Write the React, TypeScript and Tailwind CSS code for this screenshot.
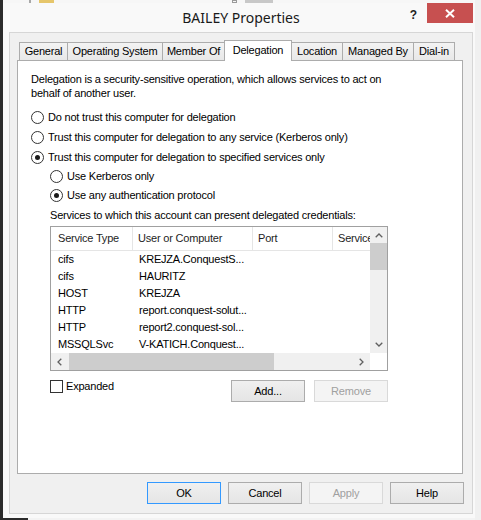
import React from "react";

function Radio({ checked }: { checked?: boolean }) {
  return (
    <span className="w-[13px] h-[13px] rounded-full border border-[#333333] bg-white flex items-center justify-center shrink-0">
      {checked && <span className="w-[5px] h-[5px] rounded-full bg-[#1a1a1a]" />}
    </span>
  );
}

function ChevUp() {
  return (
    <svg width="8" height="5" viewBox="0 0 8 5">
      <path d="M0.7 4.3 L4 1 L7.3 4.3" stroke="#606060" strokeWidth="1.3" fill="none" />
    </svg>
  );
}
function ChevDown() {
  return (
    <svg width="8" height="5" viewBox="0 0 8 5">
      <path d="M0.7 0.7 L4 4 L7.3 0.7" stroke="#606060" strokeWidth="1.3" fill="none" />
    </svg>
  );
}
function ChevLeft() {
  return (
    <svg width="5" height="8" viewBox="0 0 5 8">
      <path d="M4.3 0.7 L1 4 L4.3 7.3" stroke="#606060" strokeWidth="1.3" fill="none" />
    </svg>
  );
}
function ChevRight() {
  return (
    <svg width="5" height="8" viewBox="0 0 5 8">
      <path d="M0.7 0.7 L4 4 L0.7 7.3" stroke="#606060" strokeWidth="1.3" fill="none" />
    </svg>
  );
}

const tabs = [
  { label: "General", cls: "w-[49px]" },
  { label: "Operating System", cls: "w-[96px] -ml-px" },
  { label: "Member Of", cls: "w-[63px] -ml-px" },
  { label: "Delegation", cls: "w-[68px] -ml-px", active: true },
  { label: "Location", cls: "w-[52px] -ml-px" },
  { label: "Managed By", cls: "w-[72px] -ml-px" },
  { label: "Dial-in", cls: "w-[42px] -ml-px" },
];

const rows = [
  ["cifs", "KREJZA.ConquestS..."],
  ["cifs", "HAURITZ"],
  ["HOST", "KREJZA"],
  ["HTTP", "report.conquest-solut..."],
  ["HTTP", "report2.conquest-sol..."],
  ["MSSQLSvc", "V-KATICH.Conquest..."],
];

export default function App() {
  return (
    <div className="w-[481px] h-[520px] flex overflow-hidden bg-[#f0f0f0] font-['Liberation_Sans','Noto_Sans',sans-serif] text-[11px] tracking-[-0.2px] text-black">
      <div className="w-[3px] h-full bg-[#2b2b2b] shrink-0" />
      <div className="w-[472px] shrink-0 flex flex-col">
        {/* strip of the window behind */}
        <div className="h-[3px] flex bg-[#f7f7f7]">
          <div className="w-[26px]" />
          <div className="w-[2px] bg-[#a8a8a8]" />
          <div className="w-[8px]" />
          <div className="w-[15px] bg-[#e6c66b]" />
          <div className="w-[178px]" />
          <div className="w-[5px] border border-[#9a9a9a]" />
          <div className="w-[8px]" />
          <div className="w-[28px] bg-[#c8c8c8]" />
        </div>

        {/* window */}
        <div className="h-[515px] bg-[#f9f9f9] flex flex-col">
          {/* title bar */}
          <div className="h-[29px] grid grid-cols-[1fr_auto_1fr]">
            <div />
            <div className="flex items-center pl-[4px] font-['Noto_Sans',sans-serif] tracking-normal text-[14px] text-[#1a1a1a] whitespace-nowrap">
              BAILEY Properties
            </div>
            <div className="flex justify-end items-start">
              <span className="mt-[4px] mr-[10px] text-[12px] leading-[16px] font-bold text-[#222222]">?</span>
              <div className="w-[46px] h-[20px] mr-[2px] bg-[#c75050] flex items-center justify-center">
                <svg width="10" height="9" viewBox="0 0 10 9">
                  <path d="M1 0.8 L9 8.2 M9 0.8 L1 8.2" stroke="white" strokeWidth="2" />
                </svg>
              </div>
            </div>
          </div>

          {/* inner panel */}
          <div className="ml-[6px] w-[464px] h-[482px] border border-[#d6d6d6] bg-[#f0f0f0] flex flex-col pt-[7px]">
            {/* tabs */}
            <div className="ml-[7px] pl-[2px] flex items-end">
              {tabs.map((t) =>
                t.active ? (
                  <div
                    key={t.label}
                    className={`${t.cls} h-[21px] -mb-px relative z-10 bg-white border border-b-0 border-[#acacac] flex items-center justify-center whitespace-nowrap`}
                  >
                    <span className="-mt-[2px]">{t.label}</span>
                  </div>
                ) : (
                  <div
                    key={t.label}
                    className={`${t.cls} h-[18px] bg-linear-to-b from-[#f3f3f3] to-[#e8e8e8] border border-b-0 border-[#acacac] flex items-center justify-center whitespace-nowrap`}
                  >
                    {t.label}
                  </div>
                )
              )}
            </div>

            {/* tab page */}
            <div className="ml-[7px] w-[446px] h-[414px] border border-[#acacac] bg-white pt-[12px] pl-[13px] flex flex-col">
              <div className="leading-[13.5px] h-[27px]">
                <div>Delegation is a security-sensitive operation, which allows services to act on</div>
                <div>behalf of another user.</div>
              </div>

              <div className="mt-[7px] h-[20px] flex items-center gap-[4px]">
                <Radio />
                <span>Do not trust this computer for delegation</span>
              </div>
              <div className="h-[20px] flex items-center gap-[4px]">
                <Radio />
                <span>Trust this computer for delegation to any service (Kerberos only)</span>
              </div>
              <div className="h-[20px] flex items-center gap-[4px]">
                <Radio checked />
                <span>Trust this computer for delegation to specified services only</span>
              </div>
              <div className="ml-[19px] h-[19px] flex items-center gap-[4px]">
                <Radio />
                <span>Use Kerberos only</span>
              </div>
              <div className="ml-[19px] h-[19px] flex items-center gap-[4px]">
                <Radio checked />
                <span>Use any authentication protocol</span>
              </div>
              <div className="ml-[19px] h-[20px] flex items-center">
                Services to which this account can present delegated credentials:
              </div>

              {/* list view */}
              <div className="ml-[19px] mt-[1px] w-[338px] h-[145px] border border-[#a0a0a0] bg-white flex flex-col">
                <div className="h-[126px] flex">
                  <div className="w-[319px] flex flex-col overflow-hidden">
                    <div className="h-[24px] border-b border-[#e5e5e5] flex text-[#1e1e1e] whitespace-nowrap">
                      <div className="w-[82px] shrink-0 border-r border-[#e5e5e5] pl-[7px] flex items-center">Service Type</div>
                      <div className="w-[120px] shrink-0 border-r border-[#e5e5e5] pl-[5px] flex items-center">User or Computer</div>
                      <div className="w-[80px] shrink-0 border-r border-[#e5e5e5] pl-[5px] flex items-center">Port</div>
                      <div className="w-[60px] shrink-0 pl-[5px] flex items-center">Service</div>
                    </div>
                    {rows.map((r, i) => (
                      <div key={i} className="h-[17px] flex items-center whitespace-nowrap shrink-0">
                        <div className="w-[82px] shrink-0 pl-[7px]">{r[0]}</div>
                        <div className="w-[120px] shrink-0 pl-[6px]">{r[1]}</div>
                      </div>
                    ))}
                  </div>
                  <div className="w-[17px] bg-[#f0f0f0] flex flex-col">
                    <div className="h-[16px] flex items-center justify-center">
                      <ChevUp />
                    </div>
                    <div className="h-[27px] bg-[#cdcdcd]" />
                    <div className="flex-1" />
                    <div className="h-[17px] flex items-center justify-center">
                      <ChevDown />
                    </div>
                  </div>
                </div>
                <div className="h-[17px] flex">
                  <div className="w-[319px] bg-[#f0f0f0] flex">
                    <div className="w-[17px] flex items-center justify-center">
                      <ChevLeft />
                    </div>
                    <div className="ml-px w-[205px] bg-[#cdcdcd]" />
                    <div className="flex-1" />
                    <div className="w-[17px] flex items-center justify-center">
                      <ChevRight />
                    </div>
                  </div>
                  <div className="w-[17px] bg-white" />
                </div>
              </div>

              {/* expanded + buttons */}
              <div className="ml-[19px] mt-[9px] flex items-start">
                <div className="w-[181px] h-[13px] flex items-center gap-[3px]">
                  <span className="w-[13px] h-[13px] border border-[#333333] bg-white shrink-0" />
                  <span>Expanded</span>
                </div>
                <div className="w-[74px] h-[22px] border border-[#acacac] bg-linear-to-b from-[#f0f0f0] to-[#e5e5e5] flex items-center justify-center">
                  Add...
                </div>
                <div className="ml-[9px] w-[74px] h-[22px] border border-[#d9d9d9] bg-[#f4f4f4] text-[#a0a0a0] flex items-center justify-center">
                  Remove
                </div>
              </div>
            </div>

            {/* dialog buttons */}
            <div className="mt-[8px] pr-[8px] flex justify-end gap-[7px]">
              <div className="w-[74px] h-[22px] border border-[#3399ff] bg-linear-to-b from-[#f0f0f0] to-[#e5e5e5] flex items-center justify-center">
                OK
              </div>
              <div className="w-[74px] h-[22px] border border-[#acacac] bg-linear-to-b from-[#f0f0f0] to-[#e5e5e5] flex items-center justify-center">
                Cancel
              </div>
              <div className="w-[74px] h-[22px] border border-[#d9d9d9] bg-[#f4f4f4] text-[#a0a0a0] flex items-center justify-center">
                Apply
              </div>
              <div className="w-[74px] h-[22px] border border-[#acacac] bg-linear-to-b from-[#f0f0f0] to-[#e5e5e5] flex items-center justify-center">
                Help
              </div>
            </div>
          </div>
        </div>

        {/* below window */}
        <div className="h-[2px] flex bg-[#f3f3f3]">
          <div className="w-[25px] bg-[#2b2b2b]" />
        </div>
      </div>
      <div className="flex-1 bg-[#f0f0f0]" />
    </div>
  );
}
